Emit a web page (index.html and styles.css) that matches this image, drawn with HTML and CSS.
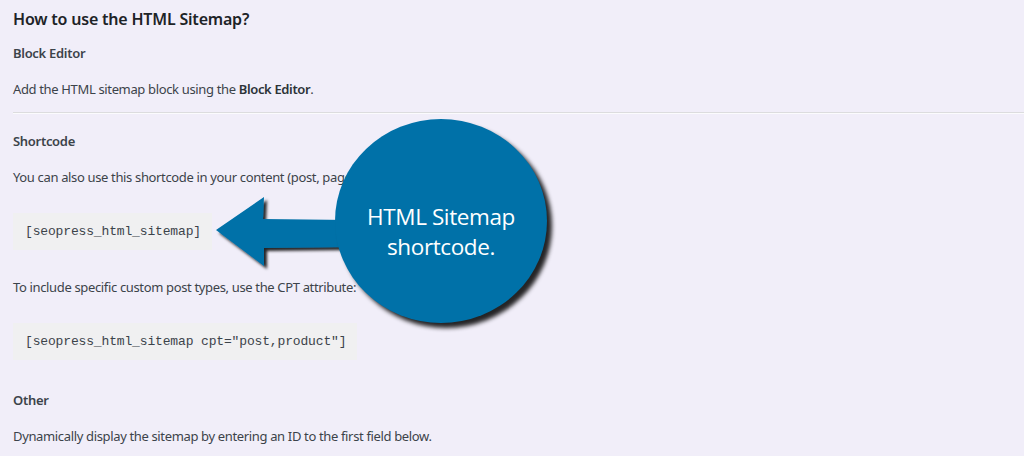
FILE: index.html
```html
<!DOCTYPE html>
<html lang="en">
<head>
<meta charset="utf-8">
<title>HTML Sitemap</title>
<link rel="stylesheet" href="styles.css">
</head>
<body>
<div class="page">
  <h2 class="title">How to use the HTML Sitemap?</h2>
  <h3 class="sub">Block Editor</h3>
  <p class="txt">Add the HTML sitemap block using the <strong>Block Editor</strong>.</p>
  <hr class="sep">
  <h3 class="sub sub-2">Shortcode</h3>
  <p class="txt">You can also use this shortcode in your content (post, page, post type...):</p>
  <pre class="code">[seopress_html_sitemap]</pre>
  <p class="txt">To include specific custom post types, use the CPT attribute:</p>
  <pre class="code">[seopress_html_sitemap cpt="post,product"]</pre>
  <h3 class="sub sub-3">Other</h3>
  <p class="txt">Dynamically display the sitemap by entering an ID to the first field below.</p>

  <svg class="arrow" width="140" height="90" viewBox="0 0 140 90" aria-hidden="true">
    <defs>
      <filter id="sh" x="-20%" y="-20%" width="150%" height="150%">
        <feDropShadow dx="3" dy="3" stdDeviation="1.6" flood-color="#000" flood-opacity="0.85"/>
      </filter>
    </defs>
    <path d="M2 35 L50 2 L49 24 L135 25 L135 52 L50 53 L50 71 Z" fill="#0071a8" filter="url(#sh)"/>
  </svg>
  <div class="bubble">
    <span>HTML Sitemap<br>shortcode.</span>
  </div>
</div>
</body>
</html>
```
FILE: styles.css
```css
html, body {
  margin: 0;
  padding: 0;
}
body {
  background: #f1eef9;
  color: #3c434a;
  font-family: "Noto Sans", "Open Sans", sans-serif;
  width: 1024px;
  height: 456px;
  overflow: hidden;
}
.page {
  position: relative;
  padding: 7px 0 0 13px;
}
.title {
  margin: 0;
  font-size: 16px;
  font-weight: 600;
  color: #1d2327;
  line-height: 24px;
  letter-spacing: -0.2px;
}
.sub {
  margin: 12px 0 0;
  font-size: 13px;
  font-weight: 600;
  color: #3c434a;
  line-height: 20px;
  letter-spacing: -0.3px;
}
.sub-2 {
  margin-top: 17px;
}
.sub-3 {
  margin-top: 30px;
}
.txt {
  margin: 16px 0 0;
  font-size: 13px;
  line-height: 20px;
  letter-spacing: -0.35px;
}
.txt strong {
  font-weight: 600;
  color: #2c3338;
}
.sep {
  margin: 13px 0 0;
  border: 0;
  border-top: 1px solid #dcdcde;
  border-bottom: 1px solid #fbfbfd;
  height: 0;
}
.code {
  display: block;
  width: fit-content;
  margin: 26px 0 0;
  padding: 9px 11px 8px 12px;
  background: #f0f0f1;
  font-family: "Liberation Mono", "Courier New", monospace;
  font-size: 13px;
  line-height: 20px;
  color: #3c434a;
  letter-spacing: -0.15px;
}
.code + .txt {
  margin-top: 27px;
}
.arrow {
  position: absolute;
  left: 214px;
  top: 195px;
  overflow: visible;
}
.bubble {
  position: absolute;
  left: 335px;
  top: 119px;
  width: 212px;
  height: 204px;
  border-radius: 50%;
  background: #0071a8;
  box-shadow: 5px 5px 4px rgba(0, 0, 0, 0.85);
  display: flex;
  align-items: center;
  justify-content: center;
  text-align: center;
}
.bubble span {
  color: #ffffff;
  font-family: "Open Sans", "Noto Sans", sans-serif;
  font-size: 22.5px;
  line-height: 30px;
  letter-spacing: -0.4px;
  margin-top: 22px;
}
```
